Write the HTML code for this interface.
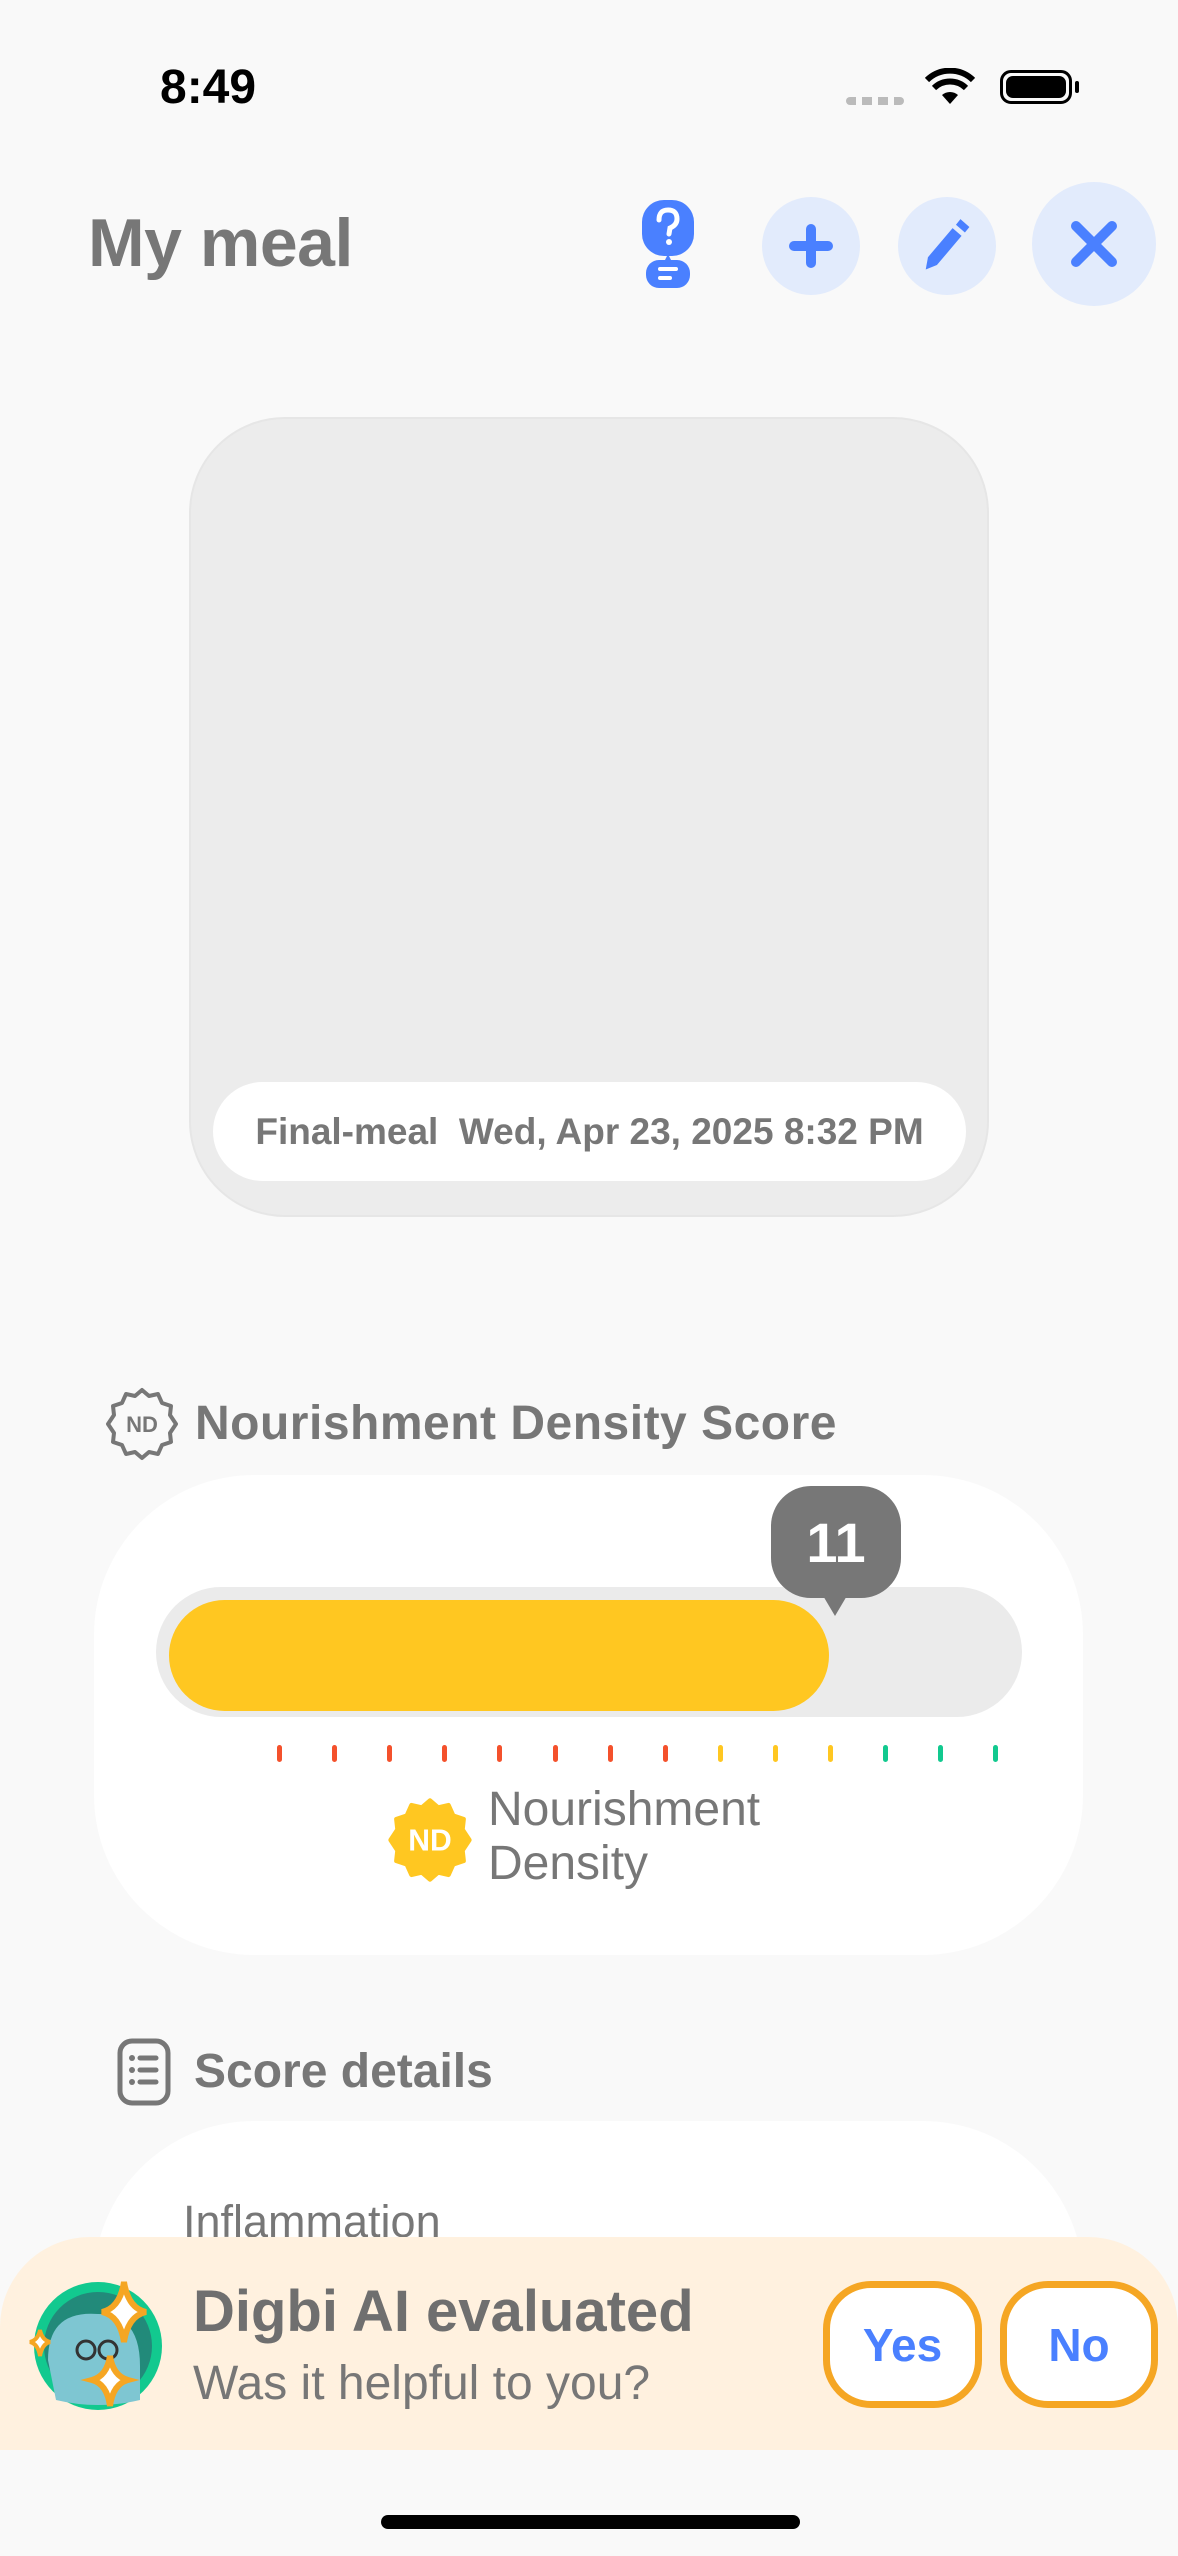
<!DOCTYPE html>
<html><head><meta charset="utf-8"><style>
*{margin:0;padding:0;box-sizing:border-box}
body{width:1178px;height:2556px;background:#f9f9f9;font-family:"Liberation Sans",sans-serif;position:relative;overflow:hidden;color:#777}
.a{position:absolute}
.circ{position:absolute;border-radius:50%;background:#e2ebfc;display:flex;align-items:center;justify-content:center}
.tick{position:absolute;top:1745px;width:5px;height:17px;border-radius:3px}
.btn{position:absolute;top:2281px;height:127px;border:7px solid #f5a623;border-radius:48px;background:#fff;display:flex;align-items:center;justify-content:center;color:#4a80ff;font-weight:bold;font-size:46px}
</style></head><body>
<div class="a" style="left:160px;top:60px;font-size:48px;font-weight:bold;color:#000">8:49</div>
<div class="a" style="left:846px;top:97px;width:58px;height:8px;background:repeating-linear-gradient(90deg,#bbb 0 10px,transparent 10px 16px);border-radius:4px"></div>
<svg class="a" style="left:925px;top:68px" width="50" height="40" viewBox="0 0 50 40"><path d="M25 36 L17 27 A12 12 0 0 1 33 27Z" fill="#000"/><path d="M9 20 A23 23 0 0 1 41 20" stroke="#000" stroke-width="6" fill="none"/><path d="M2 12 A33 33 0 0 1 48 12" stroke="#000" stroke-width="6" fill="none"/></svg>
<div class="a" style="left:1000px;top:70px;width:72px;height:34px;border:3px solid #000;border-radius:11px;padding:3px"><div style="width:100%;height:100%;background:#000;border-radius:7px"></div></div>
<div class="a" style="left:1075px;top:81px;width:4px;height:12px;background:#000;border-radius:2px"></div>

<div class="a" style="left:88px;top:204px;font-size:68px;font-weight:bold;letter-spacing:-0.5px;color:#777">My meal</div>
<svg class="a" style="left:640px;top:198px" width="56" height="92" viewBox="0 0 56 92"><rect x="2" y="2" width="52" height="56" rx="22" fill="#4a80ff"/><path d="M19 22 Q19 12 28 12 Q37 12 37 21 Q37 27 30 30 L29 36" stroke="#fff" stroke-width="5" fill="none" stroke-linecap="round"/><circle cx="29" cy="44" r="3" fill="#fff"/><path d="M28 56 L24 64 L32 64Z" fill="#4a80ff"/><rect x="6" y="62" width="44" height="28" rx="13" fill="#4a80ff"/><rect x="18" y="69" width="20" height="4" rx="2" fill="#fff"/><rect x="18" y="78" width="14" height="4" rx="2" fill="#fff"/></svg>
<div class="circ" style="left:762px;top:197px;width:98px;height:98px"><svg width="50" height="50" viewBox="0 0 50 50"><path d="M25 8V42M8 25H42" stroke="#4a80ff" stroke-width="10" stroke-linecap="round"/></svg></div>
<div class="circ" style="left:898px;top:197px;width:98px;height:98px"><svg width="56" height="56" viewBox="0 0 50 50"><path d="M6 46 L8 35 L30 9 L38 16 L16 42Z" fill="#4a80ff"/><path d="M33 6 L37 1 L45 8 L41 13Z" fill="#4a80ff"/></svg></div>
<div class="circ" style="left:1032px;top:182px;width:124px;height:124px"><svg width="56" height="56" viewBox="0 0 56 56"><path d="M10 10L46 46M46 10L10 46" stroke="#4a80ff" stroke-width="10" stroke-linecap="round"/></svg></div>

<div class="a" style="left:189px;top:417px;width:800px;height:800px;background:#ececec;border:2px solid #e6e6e6;border-radius:96px"></div>
<div class="a" style="left:213px;top:1082px;width:753px;height:99px;background:#fff;border-radius:50px;display:flex;align-items:center;justify-content:center;font-size:37px;font-weight:bold;color:#777">Final-meal&nbsp;&nbsp;Wed, Apr 23, 2025 8:32 PM</div>

<svg class="a" style="left:104px;top:1386px" width="76" height="76" viewBox="0 0 76 76"><path d="M38 4 L45 10 L54 8 L58 17 L67 20 L66 29 L72 38 L66 47 L67 56 L58 59 L54 68 L45 66 L38 72 L31 66 L22 68 L18 59 L9 56 L10 47 L4 38 L10 29 L9 20 L18 17 L22 8 L31 10Z" fill="none" stroke="#777" stroke-width="4" stroke-linejoin="round"/><text x="38" y="46" text-anchor="middle" font-family="Liberation Sans" font-weight="bold" font-size="22" fill="#777">ND</text></svg>
<div class="a" style="left:195px;top:1396px;font-size:48px;font-weight:bold;color:#777;letter-spacing:0.5px">Nourishment Density Score</div>

<div class="a" style="left:94px;top:1475px;width:989px;height:480px;background:#fff;border-radius:160px"></div>
<div class="a" style="left:156px;top:1587px;width:866px;height:130px;background:#ebebeb;border-radius:65px"></div>
<div class="a" style="left:169px;top:1600px;width:660px;height:111px;background:#ffc721;border-radius:56px"></div>
<div class="a" style="left:771px;top:1486px;width:130px;height:112px;background:#777;border-radius:40px;display:flex;align-items:center;justify-content:center;color:#fff;font-weight:bold;font-size:56px">11</div>
<div class="a" style="left:822px;top:1594px;width:0;height:0;border-left:13px solid transparent;border-right:13px solid transparent;border-top:22px solid #777"></div>
<div class="tick" style="left:277px;background:#f4512c"></div><div class="tick" style="left:332px;background:#f4512c"></div><div class="tick" style="left:387px;background:#f4512c"></div><div class="tick" style="left:442px;background:#f4512c"></div><div class="tick" style="left:497px;background:#f4512c"></div><div class="tick" style="left:553px;background:#f4512c"></div><div class="tick" style="left:608px;background:#f4512c"></div><div class="tick" style="left:663px;background:#f4512c"></div><div class="tick" style="left:718px;background:#ffc721"></div><div class="tick" style="left:773px;background:#ffc721"></div><div class="tick" style="left:828px;background:#ffc721"></div><div class="tick" style="left:883px;background:#12c98f"></div><div class="tick" style="left:938px;background:#12c98f"></div><div class="tick" style="left:993px;background:#12c98f"></div>
<svg class="a" style="left:386px;top:1796px" width="88" height="88" viewBox="0 0 76 76"><path d="M38 4 L45 10 L54 8 L58 17 L67 20 L66 29 L72 38 L66 47 L67 56 L58 59 L54 68 L45 66 L38 72 L31 66 L22 68 L18 59 L9 56 L10 47 L4 38 L10 29 L9 20 L18 17 L22 8 L31 10Z" fill="#ffc721" stroke="#ffc721" stroke-width="4" stroke-linejoin="round"/><text x="38" y="47" text-anchor="middle" font-family="Liberation Sans" font-weight="bold" font-size="26" fill="#fff">ND</text></svg>
<div class="a" style="left:488px;top:1783px;font-size:48px;line-height:54px;color:#777">Nourishment<br>Density</div>

<svg class="a" style="left:117px;top:2038px" width="54" height="68" viewBox="0 0 54 68"><rect x="3" y="3" width="48" height="62" rx="12" fill="none" stroke="#777" stroke-width="5"/><circle cx="15" cy="20" r="3" fill="#777"/><circle cx="15" cy="32" r="3" fill="#777"/><circle cx="15" cy="44" r="3" fill="#777"/><path d="M23 20H39M23 32H39M23 44H39" stroke="#777" stroke-width="5" stroke-linecap="round"/></svg>
<div class="a" style="left:194px;top:2044px;font-size:48px;font-weight:bold;color:#777">Score details</div>
<div class="a" style="left:94px;top:2121px;width:989px;height:200px;background:#fff;border-radius:160px 160px 0 0"></div>
<div class="a" style="left:183px;top:2196px;font-size:45px;color:#777">Inflammation</div>

<div class="a" style="left:0;top:2237px;width:1178px;height:213px;background:#fff1df;border-radius:90px 90px 0 0"></div>
<svg class="a" style="left:28px;top:2270px" width="140" height="140" viewBox="0 0 140 140"><circle cx="70" cy="76" r="64" fill="#12c98f"/><circle cx="70" cy="76" r="54" fill="#228a7a"/><path d="M20 90 Q20 40 70 44 Q112 44 112 96 L112 130 Q70 140 28 130Z" fill="#7ec6d2"/><circle cx="58" cy="80" r="9" fill="none" stroke="#333" stroke-width="3"/><circle cx="80" cy="80" r="9" fill="none" stroke="#333" stroke-width="3"/><path d="M96 12 Q100 38 118 42 Q100 46 96 72 Q92 46 74 42 Q92 38 96 12Z" fill="#fff" stroke="#f5a623" stroke-width="6"/><path d="M82 86 Q85 106 100 110 Q85 114 82 136 Q79 114 64 110 Q79 106 82 86Z" fill="#fff" stroke="#f5a623" stroke-width="6"/><path d="M12 60 Q14 70 22 72 Q14 74 12 86 Q10 74 2 72 Q10 70 12 60Z" fill="#fff" stroke="#f5a623" stroke-width="4"/></svg>
<div class="a" style="left:193px;top:2278px;font-size:58px;font-weight:bold;color:#6f6f6f">Digbi AI evaluated</div>
<div class="a" style="left:193px;top:2356px;font-size:48px;color:#777">Was it helpful to you?</div>
<div class="btn" style="left:823px;width:159px">Yes</div>
<div class="btn" style="left:1000px;width:158px">No</div>

<div class="a" style="left:381px;top:2515px;width:419px;height:14px;background:#000;border-radius:7px"></div>
</body></html>
